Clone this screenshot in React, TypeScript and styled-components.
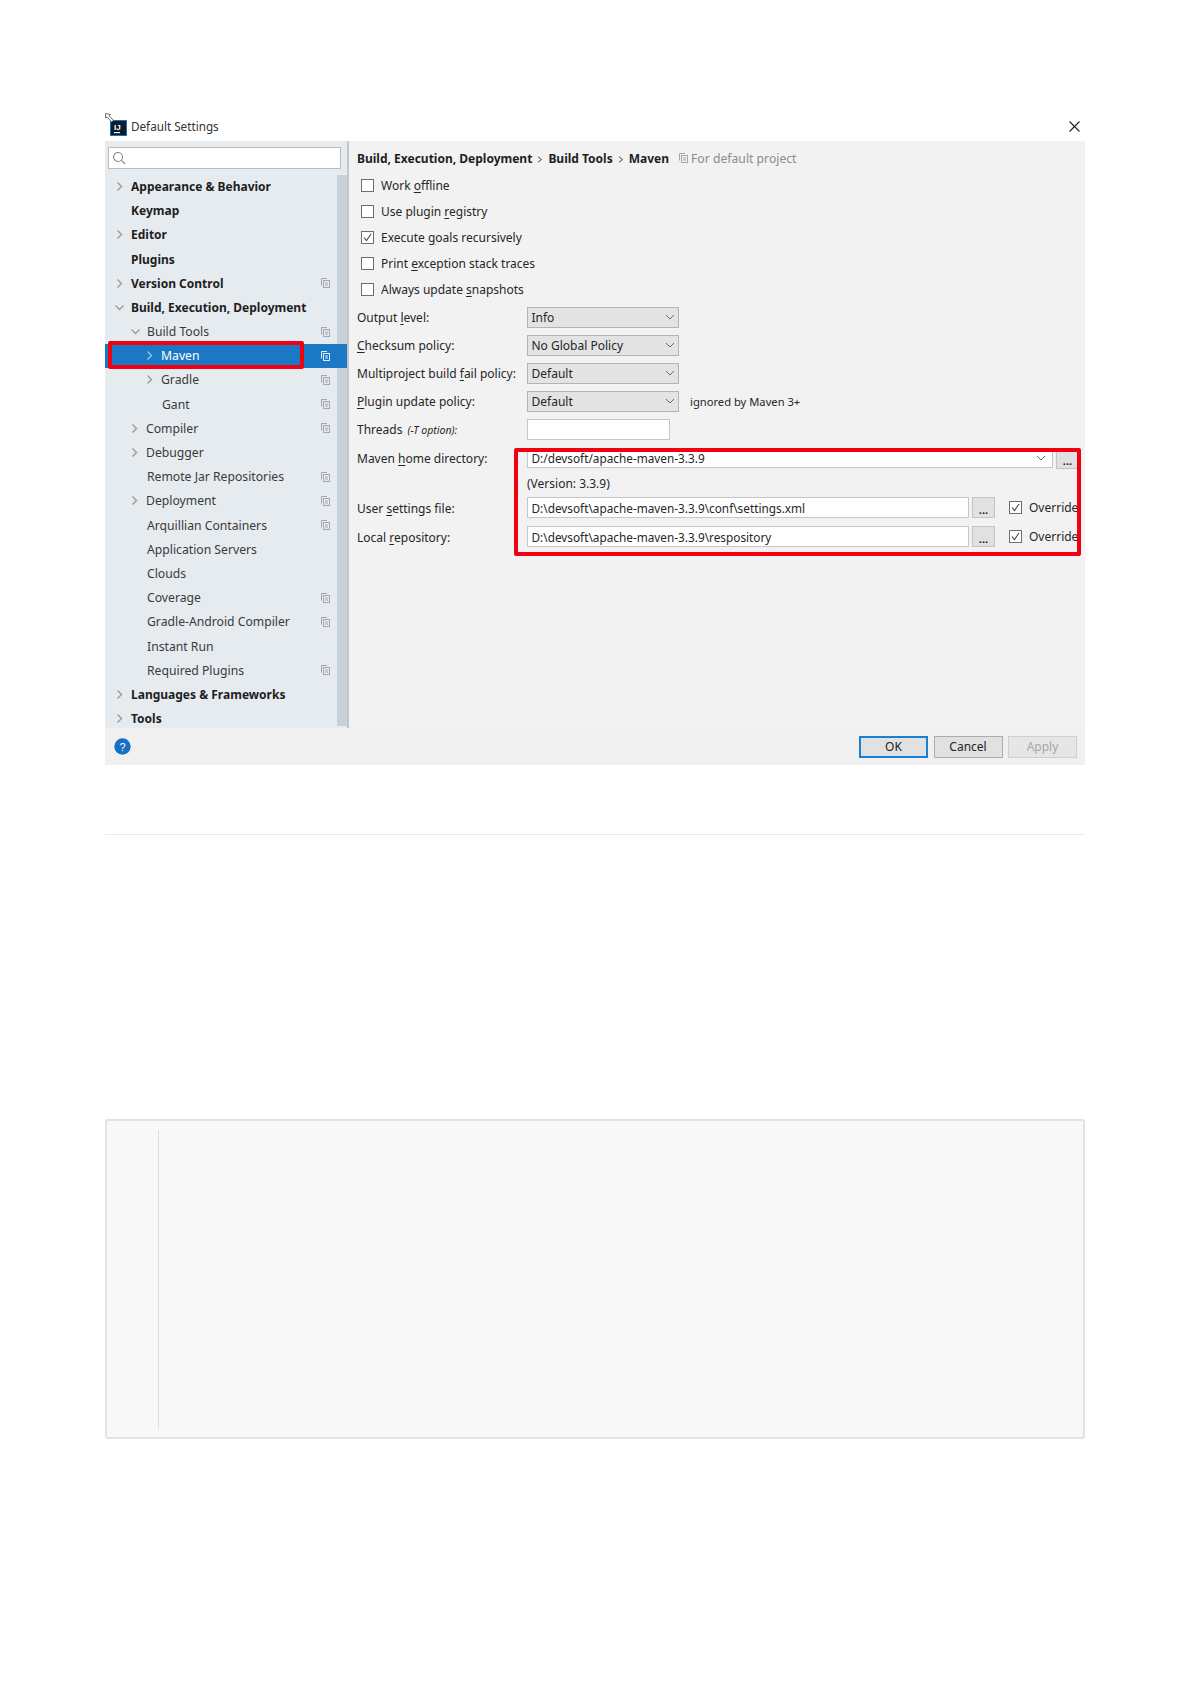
import React from "react";
import styled, { createGlobalStyle } from "styled-components";

const Global = createGlobalStyle`
  html, body { margin: 0; padding: 0; background: #fff; }
  body { font-family: "Noto Sans", "Liberation Sans", sans-serif; font-size: 12px; color: #262626; }
`;

const Page = styled.div`
  width: 980px;
  height: 1683px;
  padding: 0 0 0 105px;
  overflow: hidden;
`;
const Dialog = styled.section`
  position: relative;
  margin-top: 111px;
  height: 654px;
  display: flex;
  flex-direction: column;
`;
const TitleBar = styled.header`
  height: 30px;
  display: flex;
  align-items: center;
  padding: 0 5px 0 6px;
  gap: 5px;
  flex: none;
`;
const TitleText = styled.span`
  font-size: 11.7px;
  color: #333;
  flex: 1;
`;
const CloseBtn = styled.span`
  display: flex;
`;
const Body = styled.div`
  flex: 1;
  display: flex;
  min-height: 0;
`;
const Sidebar = styled.aside`
  position: relative;
  width: 242px;
  flex: none;
  background: #e6ebf0;
  border-right: 2px solid #c2c6ca;
  display: flex;
  flex-direction: column;
  overflow: hidden;
`;
const Search = styled.div`
  height: 20px;
  margin: 6px 6px 5.4px 3px;
  border: 1px solid #bdbdbd;
  background: #fff;
  display: flex;
  align-items: center;
  padding-left: 3px;
  flex: none;
`;
const Tree = styled.div`
  position: relative;
  flex: 1;
`;
const Thumb = styled.div`
  position: absolute;
  right: 0;
  top: 1px;
  bottom: 5px;
  width: 10px;
  background: #c9d1d8;
`;
const Row = styled.div<{ $indent: number; $bold?: boolean; $selected?: boolean }>`
  position: relative;
  height: 24.2px;
  display: flex;
  align-items: center;
  padding-left: ${(p) => p.$indent}px;
  font-weight: ${(p) => (p.$bold ? 700 : 400)};
  font-size: ${(p) => (p.$bold ? 12 : 12.2)}px;
  color: ${(p) => (p.$selected ? "#fff" : p.$bold ? "#1e1e1e" : "#3a3a3a")};
  background: ${(p) => (p.$selected ? "#1a78c4" : "transparent")};
  white-space: nowrap;
`;
const ChevronSlot = styled.span`
  width: 13px;
  margin-left: -18px;
  margin-right: 5px;
  display: flex;
  align-items: center;
  justify-content: center;
  flex: none;
`;
const RowLabel = styled.span`
  flex: 1;
`;
const RowCopy = styled.span`
  display: flex;
  margin-right: 17px;
`;
const Main = styled.main`
  flex: 1;
  background: #f2f2f2;
  padding: 0 5px 0 8px;
  position: relative;
  overflow: hidden;
`;
const Crumbs = styled.div`
  height: 31px;
  padding-top: 3px;
  box-sizing: border-box;
  display: flex;
  align-items: center;
  font-weight: 700;
  color: #1e1e1e;
  font-size: 12px;
  white-space: nowrap;
`;
const CrumbSep = styled.span`
  display: inline-flex;
  margin: 2px 5px 0;
`;
const Hint = styled.span`
  display: inline-flex;
  align-items: center;
  gap: 3px;
  margin-left: 10px;
  font-weight: 400;
  font-size: 12.2px;
  color: #8c8c8c;
`;
const CheckRow = styled.label`
  height: 26.1px;
  display: flex;
  align-items: center;
  padding-left: 4px;
  gap: 7px;
  white-space: nowrap;
`;
const Box = styled.span`
  width: 11px;
  height: 11px;
  border: 1px solid #6e6e6e;
  background: #fff;
  display: flex;
  align-items: center;
  justify-content: center;
  flex: none;
`;
const FormRow = styled.div<{ $h: number; $first?: boolean }>`
  height: ${(p) => p.$h}px;
  margin-top: ${(p) => (p.$first ? 1 : 0)}px;
  display: grid;
  grid-template-columns: 170px 1fr;
  align-items: center;
  white-space: nowrap;
`;
const RowText = styled.span`
  padding-top: 1px;
`;
const Mn = styled.span`
  text-decoration: underline;
  text-underline-offset: 2px;
`;
const Small = styled.span`
  font-size: 10.5px;
  font-style: italic;
  margin-left: 5px;
`;
const Control = styled.div`
  display: flex;
  align-items: center;
  min-width: 0;
`;
const Combo = styled.div`
  width: 152px;
  height: 21px;
  box-sizing: border-box;
  border: 1px solid #b4b4b4;
  background: #e3e3e3;
  display: flex;
  align-items: center;
  justify-content: space-between;
  padding: 0 3px 0 3.5px;
`;
const Aside = styled.span`
  margin-left: 11px;
  font-size: 11.2px;
`;
const Input = styled.div<{ $w: number; $h?: number }>`
  width: ${(p) => p.$w}px;
  height: ${(p) => p.$h ?? 21}px;
  box-sizing: border-box;
  border: 1px solid #c6c6c6;
  background: #fff;
  display: flex;
  align-items: center;
  justify-content: space-between;
  padding: 0 6px 0 3.5px;
  flex: none;
  font-size: 11.8px;
`;
const Dots = styled.div<{ $h?: number }>`
  width: 23px;
  height: ${(p) => p.$h ?? 21}px;
  box-sizing: border-box;
  margin-left: 3px;
  border: 1px solid #c4c4c4;
  background: #e1e1e1;
  font-weight: 700;
  font-size: 11px;
  display: flex;
  align-items: flex-end;
  justify-content: center;
  line-height: 15px;
  flex: none;
`;
const Override = styled.div`
  display: flex;
  align-items: center;
  gap: 7px;
  margin-left: 14px;
  flex: none;
`;
const Version = styled.span`
  grid-column: 2;
`;
const Footer = styled.footer`
  height: 37px;
  flex: none;
  background: #f0f0f0;
  display: flex;
  align-items: center;
  padding: 0 8px 0 9px;
  box-sizing: border-box;
`;
const Spacer = styled.div`
  flex: 1;
`;
const Btn = styled.div<{ $primary?: boolean; $disabled?: boolean }>`
  width: 69px;
  height: 22px;
  box-sizing: border-box;
  margin-left: 5.5px;
  border: ${(p) => (p.$primary ? "2px solid #1c80d2" : p.$disabled ? "1px solid #cfcfcf" : "1px solid #adadad")};
  background: ${(p) => (p.$primary ? "#e1e1e1" : p.$disabled ? "#e6e6e6" : "#e1e1e1")};
  color: ${(p) => (p.$disabled ? "#a6a6a6" : "#222")};
  display: flex;
  align-items: center;
  justify-content: center;
`;
const RedBox = styled.div<{ $l: number; $t: number; $w: number; $h: number }>`
  position: absolute;
  left: ${(p) => p.$l}px;
  top: ${(p) => p.$t}px;
  width: ${(p) => p.$w}px;
  height: ${(p) => p.$h}px;
  box-sizing: border-box;
  border: 4px solid #f00010;
  border-radius: 2px;
  pointer-events: none;
`;
const Rule = styled.hr`
  margin: 69px 0 0;
  border: 0;
  height: 1px;
  background: #eaeaea;
`;
const CodeBlock = styled.div`
  margin-top: 284px;
  height: 320px;
  box-sizing: border-box;
  border: 2px solid #e2e2e2;
  border-radius: 3px;
  background: #f8f8f8;
  padding: 9px 0 8px 51px;
`;
const Gutter = styled.div`
  height: 100%;
  width: 1px;
  background: #dcdcdc;
`;

const Chevron = ({ down, light }: { down?: boolean; light?: boolean }) => (
  <svg width="9" height="9" viewBox="0 0 9 9" fill="none" stroke={light ? "#9ec4e6" : "#9a9a9a"} strokeWidth="1.4">
    {down ? <path d="M0.5 2.5 L4.5 6.5 L8.5 2.5" /> : <path d="M2.5 0.5 L6.5 4.5 L2.5 8.5" />}
  </svg>
);
const Copy = ({ light }: { light?: boolean }) => (
  <svg width="9" height="10" viewBox="0 0 9 10" fill="none" stroke={light ? "#dcecf8" : "#a3a8ad"} strokeWidth="1">
    <path d="M0.5 7.5 V0.5 H6" />
    <rect x="2.5" y="2.5" width="6" height="7" />
    <path d="M4 5 H7 M4 7 H7" />
  </svg>
);
const Tick = () => (
  <svg width="9" height="9" viewBox="0 0 9 9" fill="none" stroke="#4a4a4a" strokeWidth="1.1">
    <path d="M1 4.5 L3.5 7.5 L8 1" />
  </svg>
);
const ComboArrow = () => (
  <svg width="10" height="6" viewBox="0 0 10 6" fill="none" stroke="#6a6a6a" strokeWidth="1">
    <path d="M1 1 L5 5 L9 1" />
  </svg>
);
const AppIcon = () => (
  <svg width="22" height="24" viewBox="0 0 22 24" style={{ marginTop: -2, marginLeft: -6, marginRight: -1 }}>
    <rect x="5.5" y="7.5" width="16" height="15" fill="#0d1b2e" stroke="#1e6fb8" strokeWidth="1" />
    <text x="9" y="16.5" fontSize="8" fontWeight="700" fill="#fff" fontFamily="Liberation Sans">IJ</text>
    <rect x="9" y="19" width="6" height="1.2" fill="#fff" />
    <path d="M0.5 0.5 L0.5 5 L2 3.8 L6.5 9 L8.5 7.3 L4 2.6 L5.5 1.5 Z" fill="#fff" stroke="#555" strokeWidth="0.8" />
  </svg>
);
const SearchIcon = () => (
  <svg width="14" height="14" viewBox="0 0 14 14" fill="none" stroke="#8a8a8a" strokeWidth="1.1">
    <circle cx="6" cy="6" r="4.5" />
    <path d="M9.3 9.3 L13 13" />
  </svg>
);
const Close = () => (
  <svg width="11" height="11" viewBox="0 0 11 11" fill="none" stroke="#222" strokeWidth="1.1">
    <path d="M0.5 0.5 L10.5 10.5 M10.5 0.5 L0.5 10.5" />
  </svg>
);
const Help = () => (
  <svg width="17" height="17" viewBox="0 0 17 17">
    <circle cx="8.5" cy="8.5" r="8.2" fill="#1a6fc4" />
    <text x="8.5" y="12.6" textAnchor="middle" fontSize="11" fill="#fff" fontFamily="Liberation Sans">?</text>
  </svg>
);
const CrumbArrow = () => (
  <svg width="6" height="7" viewBox="0 0 6 7" fill="none" stroke="#444" strokeWidth="1">
    <path d="M1 0.8 L4.5 3.5 L1 6.2" />
  </svg>
);

type Item = { label: string; indent: number; bold?: boolean; chev?: "r" | "d"; copy?: boolean; selected?: boolean };
const items: Item[] = [
  { label: "Appearance & Behavior", indent: 26, bold: true, chev: "r" },
  { label: "Keymap", indent: 26, bold: true },
  { label: "Editor", indent: 26, bold: true, chev: "r" },
  { label: "Plugins", indent: 26, bold: true },
  { label: "Version Control", indent: 26, bold: true, chev: "r", copy: true },
  { label: "Build, Execution, Deployment", indent: 26, bold: true, chev: "d" },
  { label: "Build Tools", indent: 42, chev: "d", copy: true },
  { label: "Maven", indent: 56, chev: "r", copy: true, selected: true },
  { label: "Gradle", indent: 56, chev: "r", copy: true },
  { label: "Gant", indent: 57, copy: true },
  { label: "Compiler", indent: 41, chev: "r", copy: true },
  { label: "Debugger", indent: 41, chev: "r" },
  { label: "Remote Jar Repositories", indent: 42, copy: true },
  { label: "Deployment", indent: 41, chev: "r", copy: true },
  { label: "Arquillian Containers", indent: 42, copy: true },
  { label: "Application Servers", indent: 42 },
  { label: "Clouds", indent: 42 },
  { label: "Coverage", indent: 42, copy: true },
  { label: "Gradle-Android Compiler", indent: 42, copy: true },
  { label: "Instant Run", indent: 42 },
  { label: "Required Plugins", indent: 42, copy: true },
  { label: "Languages & Frameworks", indent: 26, bold: true, chev: "r" },
  { label: "Tools", indent: 26, bold: true, chev: "r" },
];

const Check = ({ checked, children }: { checked?: boolean; children: React.ReactNode }) => (
  <CheckRow>
    <Box>{checked && <Tick />}</Box>
    <span>{children}</span>
  </CheckRow>
);

export default function App() {
  return (
    <Page>
      <Global />
      <Dialog>
        <TitleBar>
          <AppIcon />
          <TitleText>Default Settings</TitleText>
          <CloseBtn><Close /></CloseBtn>
        </TitleBar>
        <Body>
          <Sidebar>
            <Search><SearchIcon /></Search>
            <Tree>
              <Thumb />
              {items.map((it) => (
                <Row key={it.label} $indent={it.indent} $bold={it.bold} $selected={it.selected}>
                  {it.chev && (
                    <ChevronSlot>
                      <Chevron down={it.chev === "d"} light={it.selected} />
                    </ChevronSlot>
                  )}
                  <RowLabel>{it.label}</RowLabel>
                  {it.copy && <RowCopy><Copy light={it.selected} /></RowCopy>}
                </Row>
              ))}
            </Tree>
          </Sidebar>
          <Main>
            <Crumbs>
              Build, Execution, Deployment
              <CrumbSep><CrumbArrow /></CrumbSep>
              Build Tools
              <CrumbSep><CrumbArrow /></CrumbSep>
              Maven
              <Hint><Copy />For default project</Hint>
            </Crumbs>
            <Check>Work <Mn>o</Mn>ffline</Check>
            <Check>Use plugin <Mn>r</Mn>egistry</Check>
            <Check checked>Execute <Mn>g</Mn>oals recursively</Check>
            <Check>Print <Mn>e</Mn>xception stack traces</Check>
            <Check>Always update <Mn>s</Mn>napshots</Check>
            <FormRow $h={28} $first>
              <span>Output <Mn>l</Mn>evel:</span>
              <Control><Combo>Info<ComboArrow /></Combo></Control>
            </FormRow>
            <FormRow $h={28}>
              <span><Mn>C</Mn>hecksum policy:</span>
              <Control><Combo>No Global Policy<ComboArrow /></Combo></Control>
            </FormRow>
            <FormRow $h={28}>
              <span>Multiproject build <Mn>f</Mn>ail policy:</span>
              <Control><Combo>Default<ComboArrow /></Combo></Control>
            </FormRow>
            <FormRow $h={28}>
              <span><Mn>P</Mn>lugin update policy:</span>
              <Control><Combo>Default<ComboArrow /></Combo><Aside>ignored by Maven 3+</Aside></Control>
            </FormRow>
            <FormRow $h={28}>
              <RowText>Threads<Small>(-T option):</Small></RowText>
              <Control><Input $w={143} /></Control>
            </FormRow>
            <FormRow $h={30}>
              <RowText>Maven <Mn>h</Mn>ome directory:</RowText>
              <Control>
                <Input $w={526} $h={20}>D:/devsoft/apache-maven-3.3.9<ComboArrow /></Input>
                <Dots $h={21}>...</Dots>
              </Control>
            </FormRow>
            <FormRow $h={20}>
              <Version>(Version: 3.3.9)</Version>
            </FormRow>
            <FormRow $h={29}>
              <RowText>User <Mn>s</Mn>ettings file:</RowText>
              <Control>
                <Input $w={442}>D:\devsoft\apache-maven-3.3.9\conf\settings.xml</Input>
                <Dots>...</Dots>
                <Override><Box><Tick /></Box>Override</Override>
              </Control>
            </FormRow>
            <FormRow $h={29}>
              <RowText>Local <Mn>r</Mn>epository:</RowText>
              <Control>
                <Input $w={442}>D:\devsoft\apache-maven-3.3.9\respository</Input>
                <Dots>...</Dots>
                <Override><Box><Tick /></Box>Override</Override>
              </Control>
            </FormRow>
          </Main>
        </Body>
        <Footer>
          <Help />
          <Spacer />
          <Btn $primary>OK</Btn>
          <Btn>Cancel</Btn>
          <Btn $disabled>Apply</Btn>
        </Footer>
        <RedBox $l={3} $t={230} $w={196} $h={28} />
        <RedBox $l={409} $t={337} $w={567} $h={108} />
      </Dialog>
      <Rule />
      <CodeBlock><Gutter /></CodeBlock>
    </Page>
  );
}
